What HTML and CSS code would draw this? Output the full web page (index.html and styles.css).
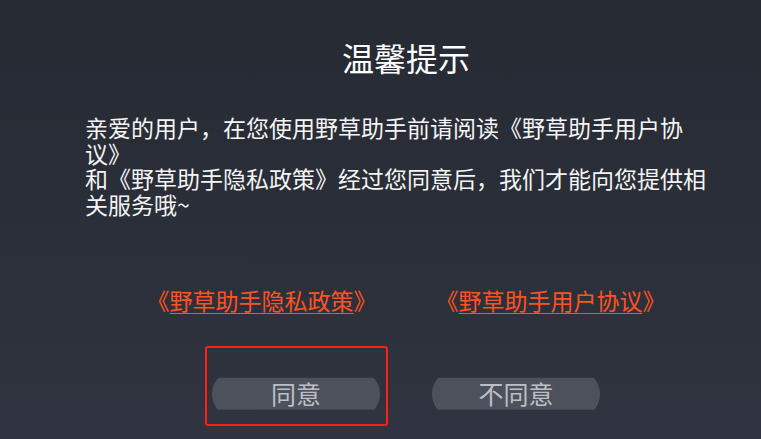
FILE: index.html
```html
<!DOCTYPE html>
<html lang="zh-CN">
<head>
<meta charset="utf-8">
<title>温馨提示</title>
<link rel="stylesheet" href="styles.css">
</head>
<body>
<div class="dialog">
  <h1 class="title">温馨提示</h1>
  <p class="message">亲爱的用户，在您使用野草助手前请阅读《野草助手用户协议》<br>和《野草助手隐私政策》经过您同意后，我们才能向您提供相关服务哦~</p>
  <div class="links">
    <a class="link" href="#">《<span class="u">野草助手隐私政策</span>》</a>
    <a class="link" href="#">《<span class="u">野草助手用户协议</span>》</a>
  </div>
  <div class="actions">
    <div class="btn-wrap highlighted"><div class="btn">同意</div></div>
    <div class="btn-wrap"><div class="btn">不同意</div></div>
  </div>
</div>
</body>
</html>
```
FILE: styles.css
```css
html, body {
  margin: 0;
  padding: 0;
}
body {
  width: 761px;
  height: 439px;
  overflow: hidden;
  background: linear-gradient(180deg, #262a33 0%, #2b2f39 55%, #2f3440 100%);
  font-family: "Noto Sans CJK SC", "Noto Sans", sans-serif;
  color: #ffffff;
}
.dialog {
  width: 642px;
  margin-left: 85px;
  padding-top: 35px;
}
.title {
  margin: 0;
  text-align: center;
  font-size: 32px;
  font-weight: 400;
  line-height: 44px;
}
.message {
  margin: 36px 0 0 0;
  font-size: 23px;
  line-height: 25.7px;
  color: #f4f4f4;
}
.links {
  display: flex;
  justify-content: center;
  gap: 59px;
  margin-top: 67px;
}
.link {
  font-size: 23px;
  line-height: 30px;
  color: #ff5220;
  text-decoration: none;
}
.link .u {
  text-decoration: underline;
  text-underline-offset: 3px;
  text-decoration-thickness: 1px;
}
.actions {
  display: flex;
  justify-content: center;
  gap: 52px;
  margin-top: 63px;
}
.btn-wrap {
  position: relative;
  width: 168px;
  height: 32px;
}
.btn {
  width: 168px;
  height: 40px;
  margin-top: -4px;
  border-radius: 16px / 20px;
  background: #4c515c;
  color: #bcc0c6;
  font-size: 25px;
  line-height: 38px;
  text-align: center;
  clip-path: inset(4px 0);
}
.highlighted::after {
  content: "";
  position: absolute;
  left: -7px;
  right: -8px;
  top: -32px;
  bottom: -16px;
  border: 2px solid #ff1f14;
  border-radius: 3px;
}
```
